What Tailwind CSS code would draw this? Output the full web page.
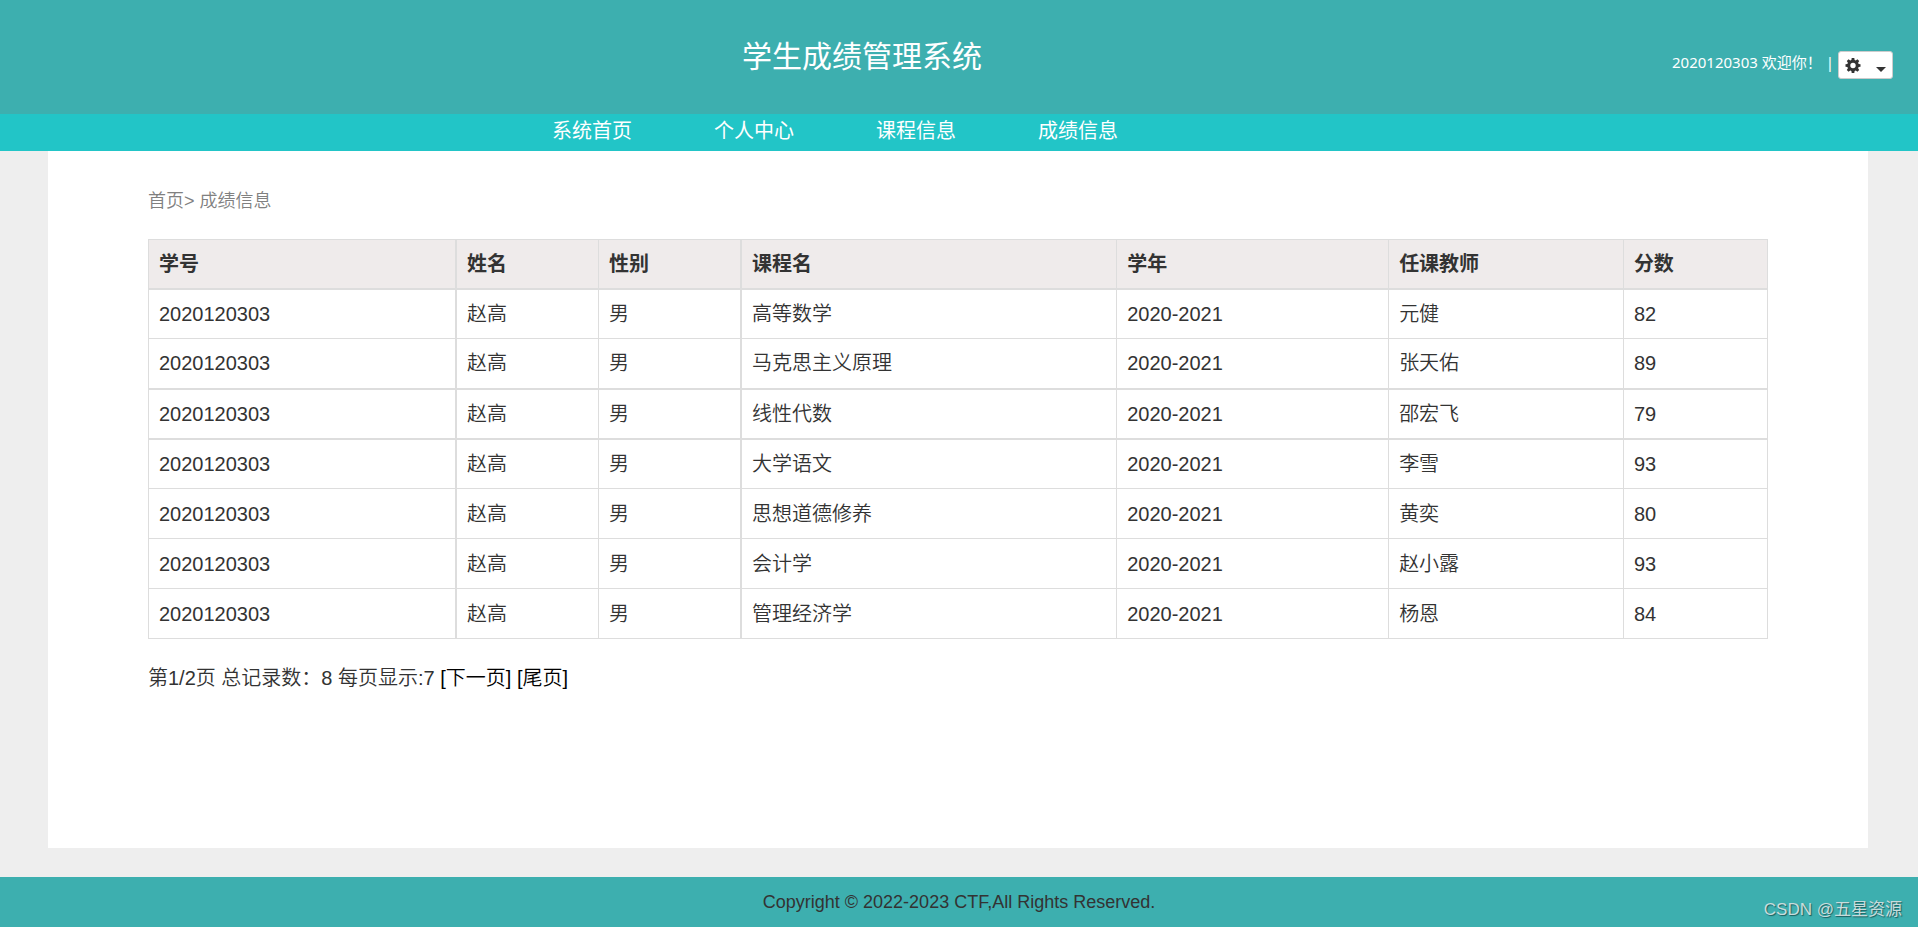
<!DOCTYPE html>
<html lang="zh-CN">
<head>
<meta charset="utf-8">
<meta name="viewport" content="width=device-width, initial-scale=1">
<title>学生成绩管理系统</title>
<script src="https://cdn.jsdelivr.net/npm/@tailwindcss/browser@4"></script>
</head>
<body class="flex min-h-screen flex-col bg-[#eee] font-['Liberation_Sans','Noto_Sans_CJK_SC',sans-serif] text-xl font-[350] text-[#333]">
<header class="relative flex h-[114px] items-center bg-[#3dafaf] font-normal text-white">
  <h1 class="w-full pr-[194px] text-center text-[30px] leading-[36px]">学生成绩管理系统</h1>
  <div class="absolute top-[51px] right-[25px] flex items-start font-['Noto_Sans','Noto_Sans_CJK_SC',sans-serif] text-[15px] leading-[22px]">
    <span>2020120303 欢迎你！</span>
    <span class="ml-1 mr-1">|</span>
    <button type="button" aria-label="设置" class="flex h-7 w-[55px] items-center justify-between rounded-[3px] border border-[#ccc] bg-white px-1.5 text-[#333]">
      <svg class="size-4" viewBox="0 0 16 16" fill="currentColor" aria-hidden="true"><path fill-rule="evenodd" d="M6.700 1h2.600l.3 1.900 1.200.5 1.600-1.100 1.800 1.800-1.100 1.600.5 1.200 1.900.3v2.600l-1.900.3-.5 1.200 1.100 1.600-1.800 1.800-1.600-1.100-1.200.5-.3 1.900H6.700l-.3-1.900-1.200-.5-1.600 1.100-1.800-1.800 1.100-1.600-.5-1.200L.5 9.800V7.200l1.900-.3.5-1.200-1.100-1.600 1.800-1.800 1.600 1.100 1.200-.5zM8 5.800a2.700 2.700 0 1 0 0 5.400 2.700 2.700 0 0 0 0-5.400z"/></svg>
      <svg class="mt-2 h-[5px] w-[10px]" viewBox="0 0 10 5" fill="currentColor" aria-hidden="true"><path d="M0 0h10L5 5z"/></svg>
    </button>
  </div>
</header>
<nav class="flex h-[37px] justify-center gap-[82px] bg-[#22c5c7] pr-[248px] font-normal leading-[34px] text-white">
  <a href="#">系统首页</a>
  <a href="#">个人中心</a>
  <a href="#">课程信息</a>
  <a href="#">成绩信息</a>
</nav>
<main class="mr-[50px] mb-[29px] ml-12 flex-1 bg-white px-[100px]">
  <p class="pt-[37px] text-lg leading-[26px] text-[#808080]"><a href="#">首页</a>&gt; 成绩信息</p>
  <table class="mt-[25px] w-full table-fixed border-collapse text-left leading-[30px] [&_td]:h-[50px] [&_td]:border [&_td]:border-[#ddd] [&_td]:px-2.5 [&_th]:h-[49px] [&_th]:border [&_th]:border-b-2 [&_th]:border-[#ddd] [&_th]:px-2.5 [&_tr>*:nth-child(1)]:border-r-2 [&_tr>*:nth-child(3)]:border-r-2 [&_tbody>tr:nth-child(2)>td]:border-b-2 [&_tbody>tr:nth-child(3)>td]:border-b-2">
    <colgroup>
      <col class="w-[19%]"><col class="w-[8.8%]"><col class="w-[8.8%]"><col class="w-[23.200%]"><col class="w-[16.800%]"><col class="w-[14.500%]"><col class="w-[8.9%]">
    </colgroup>
    <thead class="bg-[#efebeb]">
      <tr><th>学号</th><th>姓名</th><th>性别</th><th>课程名</th><th>学年</th><th>任课教师</th><th>分数</th></tr>
    </thead>
    <tbody>
      <tr><td>2020120303</td><td>赵高</td><td>男</td><td>高等数学</td><td>2020-2021</td><td>元健</td><td>82</td></tr>
      <tr><td>2020120303</td><td>赵高</td><td>男</td><td>马克思主义原理</td><td>2020-2021</td><td>张天佑</td><td>89</td></tr>
      <tr><td>2020120303</td><td>赵高</td><td>男</td><td>线性代数</td><td>2020-2021</td><td>邵宏飞</td><td>79</td></tr>
      <tr><td>2020120303</td><td>赵高</td><td>男</td><td>大学语文</td><td>2020-2021</td><td>李雪</td><td>93</td></tr>
      <tr><td>2020120303</td><td>赵高</td><td>男</td><td>思想道德修养</td><td>2020-2021</td><td>黄奕</td><td>80</td></tr>
      <tr><td>2020120303</td><td>赵高</td><td>男</td><td>会计学</td><td>2020-2021</td><td>赵小露</td><td>93</td></tr>
      <tr><td>2020120303</td><td>赵高</td><td>男</td><td>管理经济学</td><td>2020-2021</td><td>杨恩</td><td>84</td></tr>
    </tbody>
  </table>
  <p class="mt-6 leading-[30px]">第1/2页 总记录数：8 每页显示:7 <a href="#" class="text-black">[下一页]</a> <a href="#" class="text-black">[尾页]</a></p>
</main>
<footer class="relative h-[52px] border-b-2 border-white bg-[#3dafaf] text-center text-lg font-normal leading-[50px]">
  <p>Copyright © 2022-2023 CTF,All Rights Reserved.</p>
  <span class="absolute right-4 bottom-1 text-[17px] leading-[26px] text-[#c8dcdc] [text-shadow:1px_1px_1px_#1d5c5c]">CSDN @五星资源</span>
</footer>
</body>
</html>
